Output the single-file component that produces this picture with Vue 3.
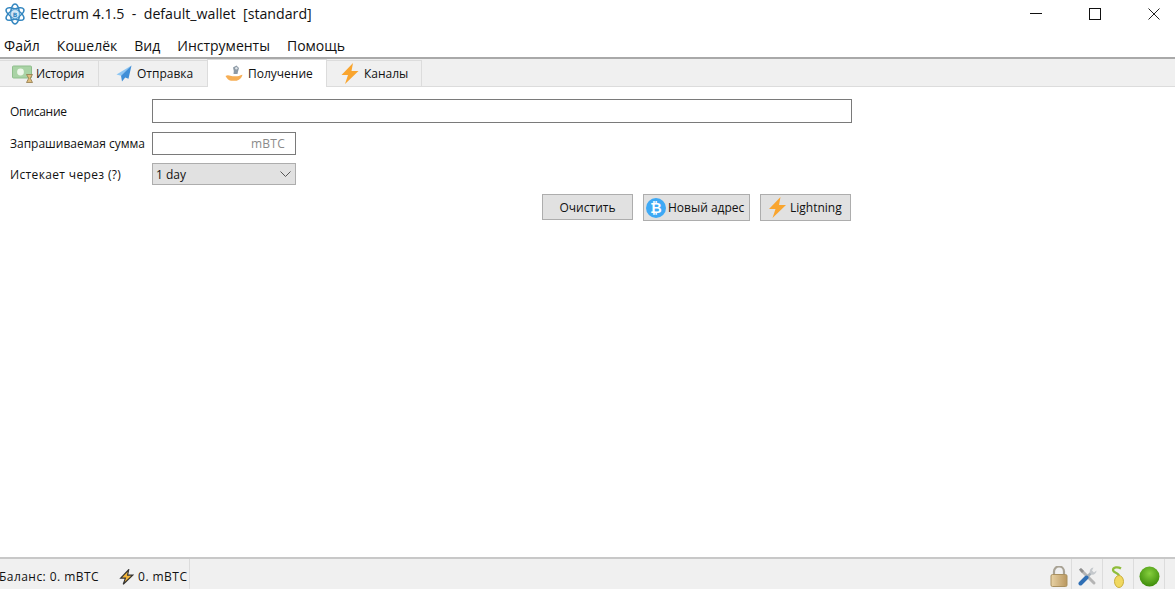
<script setup>
const menus = ['Файл', 'Кошелёк', 'Вид', 'Инструменты', 'Помощь']
</script>

<template>
  <div class="win">
    <header class="titlebar">
      <svg class="logo" width="22" height="22" viewBox="0 0 22 22" fill="none" stroke="#3587c0" stroke-width="1.5">
        <ellipse cx="11" cy="11" rx="10" ry="4.4" transform="rotate(30 11 11)" />
        <ellipse cx="11" cy="11" rx="10" ry="4.4" transform="rotate(-30 11 11)" />
        <ellipse cx="11" cy="11" rx="10" ry="4.4" transform="rotate(90 11 11)" />
        <circle cx="11" cy="11" r="4.4" fill="#d4e8f6" stroke="#6fb0dc" stroke-width="1" />
        <text x="11" y="13.8" text-anchor="middle" class="logob">B</text>
      </svg>
      <span class="title">Electrum 4.1.5&nbsp; -&nbsp; default_wallet&nbsp; [standard]</span>
      <div class="winbtns">
        <svg class="wb" width="12" height="12" viewBox="0 0 12 12"><path d="M0 5.5H12" stroke="#111" fill="none" /></svg>
        <svg class="wb" width="12" height="12" viewBox="0 0 12 12"><rect x=".5" y=".5" width="11" height="11" stroke="#111" fill="none" /></svg>
        <svg class="wb" width="12" height="12" viewBox="0 0 12 12"><path d="M.5 .5L11.5 11.5M11.5 .5L.5 11.5" stroke="#222" fill="none" /></svg>
      </div>
    </header>

    <nav class="menubar">
      <span v-for="m in menus" :key="m">{{ m }}</span>
    </nav>

    <div class="tabbar">
      <div class="tab t1">
        <svg width="21" height="18" viewBox="0 0 21 18">
          <rect x="0.5" y="1" width="19" height="12" rx="1" fill="#a9d3a5" stroke="#8fbe8c" />
          <circle cx="8.500" cy="7" r="3.400" fill="#edf7ea" />
          <path d="M14.500 9.500h6l-2.200 3.700 2.200 4.300h-6l2.200-4.300z" fill="#e0bd7c" stroke="#8f7a4d" stroke-width=".8" />
        </svg>
        <span class="sq">История</span>
      </div>
      <div class="tab t2">
        <svg width="16" height="17" viewBox="0 0 16 17">
          <path d="M15.500 .5L0.500 9.500l4.500 1.300z" fill="#8cc6f4" />
          <path d="M15.500 .5L5 10.800 6 16.500l3.200-4 3.300 1.200z" fill="#3f8fd8" />
        </svg>
        <span>Отправка</span>
      </div>
      <div class="tab active">
        <svg width="18" height="18" viewBox="0 0 18 18">
          <path d="M8 2.500L11.500 0.500 14 3 13 6.500 12.500 9H8.500l.3-3z" fill="#8d9aa6" />
          <circle cx="11.300" cy="3.200" r="1.200" fill="#dfe4e8" />
          <path d="M0.500 11c3-1.800 5 .3 7 .3h5c2 0 3-1.300 5-1.500-1 3.500-3.600 6-7 6H6c-2.500 0-4-2.500-5.500-4.800z" fill="#f6ae55" />
        </svg>
        <span>Получение</span>
      </div>
      <div class="tab t4">
        <svg width="18" height="21" viewBox="1 0.5 17 21"><path d="M12.500 0.500L1 12.500h6.500L4.500 21.500 18 8.500h-7z" fill="#f9a52f" /></svg>
        <span>Каналы</span>
      </div>
    </div>

    <main class="content">
      <div class="form">
        <label class="tight">Описание</label>
        <div class="field wide"></div>
        <label>Запрашиваемая сумма</label>
        <div class="field amount">mBTC</div>
        <label class="loose">Истекает через (?)</label>
        <div class="combo">
          <span>1 day</span>
          <svg width="11" height="6" viewBox="0 0 11 6"><path d="M.5 .5l5 5 5-5" fill="none" stroke="#555" /></svg>
        </div>
      </div>
      <div class="actions">
        <button class="b1">Очистить</button>
        <button class="b2">
          <svg width="20" height="20" viewBox="0 0 20 20">
            <circle cx="10" cy="10" r="10" fill="#3ea9f5" />
            <text x="10" y="15" text-anchor="middle" class="btc">₿</text>
          </svg>
          <span>Новый адрес</span>
        </button>
        <button class="b3">
          <svg width="19" height="21" viewBox="1 0.5 17 21"><path d="M12.500 0.500L1 12.500h6.500L4.500 21.500 18 8.500h-7z" fill="#f9a52f" /></svg>
          <span>Lightning</span>
        </button>
      </div>
    </main>

    <footer class="statusbar">
      <div class="bal">
        <span class="b-text">Баланс: 0. mBTC</span>
        <svg width="15" height="16" viewBox="0 0 19 22"><path d="M12.500 1L1.500 12.500h6.500L5 21 18 8.500h-7z" fill="#f2b53a" stroke="#333" stroke-width="1.600" /></svg>
        <span class="b-text2">0. mBTC</span>
      </div>
      <div class="sicons">
        <div class="si lock">
          <svg width="18" height="21" viewBox="0 0 18 21">
            <defs>
              <linearGradient id="lk" x1="0" y1="0" x2="1" y2="0">
                <stop offset="0" stop-color="#e8d2a4" />
                <stop offset="1" stop-color="#b9975f" />
              </linearGradient>
            </defs>
            <path d="M4 10V5.500a5 5 0 0 1 10 0V10" fill="none" stroke="#a8a294" stroke-width="2.200" />
            <rect x="1" y="8.500" width="16" height="12" rx="1.500" fill="url(#lk)" stroke="#a9905f" />
          </svg>
        </div>
        <div class="si">
          <svg width="19" height="19" viewBox="0 0 19 19">
            <path d="M3 3l13 13" stroke="#b4b4b4" stroke-width="3" stroke-linecap="round" />
            <path d="M1 2.500l2-1.500 3 3-2 2z" fill="#909090" />
            <path d="M14 5L8.500 10.500" stroke="#a9b1b8" stroke-width="2.600" />
            <path d="M8.500 10.500l-6 6" stroke="#2f6fb5" stroke-width="4" stroke-linecap="round" />
            <path d="M15.500 .5a4 4 0 0 0-3.500 5.500l1.500 1.500a4 4 0 0 0 5-4l-2.500 2-2-2z" fill="#c4c8cc" />
          </svg>
        </div>
        <div class="si">
          <svg width="14" height="22" viewBox="0 0 14 22">
            <path d="M8 10C8 6.500 2 7 2 4s5-3.500 8-1.500" fill="none" stroke="#8fbd3a" stroke-width="2.200" />
            <ellipse cx="8" cy="15.500" rx="4.500" ry="6" fill="#f0d860" stroke="#c9ae3c" />
          </svg>
        </div>
        <div class="si">
          <svg width="21" height="21" viewBox="0 0 21 21">
            <defs>
              <radialGradient id="g" cx="50%" cy="35%" r="65%">
                <stop offset="0" stop-color="#86cf3e" />
                <stop offset="1" stop-color="#3d8c0a" />
              </radialGradient>
            </defs>
            <circle cx="10.500" cy="10.500" r="10" fill="url(#g)" />
          </svg>
        </div>
      </div>
    </footer>
  </div>
</template>

<style scoped>
.win {
  width: 1175px;
  height: 589px;
  display: flex;
  flex-direction: column;
  background: #fff;
  color: #000;
  font-family: "Open Sans", "Noto Sans", sans-serif;
  overflow: hidden;
}
.titlebar {
  height: 30px;
  flex: none;
  display: flex;
  align-items: center;
  padding: 0 0 3px 4px;
  box-sizing: border-box;
}
.logo { margin-right: 4px; }
.logob { font: bold 6px "DejaVu Sans", sans-serif; fill: #3587c0; stroke: none; }
.title { font-size: 14.2px; color: #111; white-space: nowrap; }
.winbtns { margin-left: auto; display: flex; gap: 47px; padding-right: 15px; align-items: center; }
.wb { display: block; }
.menubar {
  height: 29px;
  flex: none;
  box-sizing: border-box;
  display: flex;
  gap: 17px;
  padding: 5px 0 0 4px;
  font-size: 14px;
  line-height: 22px;
  border-bottom: 2px solid #a9a9a9;
  color: #111;
}
.tabbar {
  height: 28px;
  flex: none;
  background: #f0f0f0;
  display: flex;
  align-items: flex-end;
  border-bottom: 1px solid #dcdcdc;
  box-sizing: border-box;
  font-size: 12px;
  color: #111;
}
.tab {
  height: 26px;
  box-sizing: border-box;
  display: flex;
  align-items: center;
  background: #f0f0f0;
  border: 1px solid #dcdcdc;
  border-bottom: none;
  border-left: none;
  white-space: nowrap;
}
.t1 { width: 99px; padding-left: 12px; gap: 3px; }
.sq { letter-spacing: -.15px; }
.t2 { width: 109px; padding-left: 17px; gap: 5px; }
.active {
  width: 120px;
  height: 28px;
  margin-bottom: -1px;
  padding-left: 17px;
  gap: 5px;
  background: #fff;
  border-left: 1px solid #dcdcdc;
  margin-left: -1px;
}
.t4 { width: 95px; padding-left: 14px; gap: 5px; }
.content { flex: 1; min-height: 0; padding: 12px 0 0 10px; font-size: 12px; color: #111; }
.form {
  display: grid;
  grid-template-columns: 142px 700px;
  grid-template-rows: 24px 24px 22px;
  row-gap: 8px;
  align-items: center;
}
.tight { letter-spacing: -.25px; }
.loose { letter-spacing: .35px; }
.field { box-sizing: border-box; height: 100%; background: #fff; border: 1px solid #7a7a7a; }
.amount {
  width: 144px;
  height: 23px;
  align-self: end;
  padding-right: 10px;
  text-align: right;
  line-height: 21px;
  color: #8a8a8a;
  letter-spacing: .25px;
}
.combo {
  width: 144px;
  height: 100%;
  box-sizing: border-box;
  background: #e1e1e1;
  border: 1px solid #adadad;
  display: flex;
  align-items: center;
  justify-content: space-between;
  padding: 0 4px 0 3px;
}
.actions {
  display: flex;
  margin: 9px 0 0 532px;
  align-items: flex-start;
}
button {
  font: inherit;
  color: #111;
  box-sizing: border-box;
  background: #e1e1e1;
  border: 1px solid #adadad;
  padding: 0;
  display: flex;
  align-items: center;
  white-space: nowrap;
  height: 27px;
}
.b1 { width: 91px; height: 26px; justify-content: center; margin-right: 10px; }
.b2 { width: 107px; padding-left: 2px; gap: 2px; margin-right: 10px; }
.b3 { width: 91px; padding-left: 7px; gap: 3px; }
.btc { font: bold 14px "DejaVu Sans", sans-serif; fill: #fff; }
.statusbar {
  height: 32px;
  flex: none;
  box-sizing: border-box;
  background: #f0f0f0;
  border-top: 2px solid #c8c8c8;
  display: flex;
  justify-content: space-between;
  font-size: 12px;
  color: #111;
}
.bal {
  display: flex;
  align-items: center;
  width: 190px;
  padding-top: 5px;
  box-sizing: border-box;
  border-right: 1px solid #dcdcdc;
  white-space: nowrap;
}
.b-text { margin-left: -1px; margin-right: 20px; letter-spacing: .45px; }
.b-text2 { margin-left: 4px; letter-spacing: .45px; }
.sicons { display: flex; padding-right: 10px; }
.si {
  width: 31px;
  padding-top: 5px;
  display: flex;
  align-items: center;
  justify-content: center;
  border-right: 1px solid #dcdcdc;
  box-sizing: border-box;
}
.lock { justify-content: flex-end; padding-right: 3px; }
</style>

<style>
html, body { margin: 0; background: #fff; overflow: hidden; }
</style>
